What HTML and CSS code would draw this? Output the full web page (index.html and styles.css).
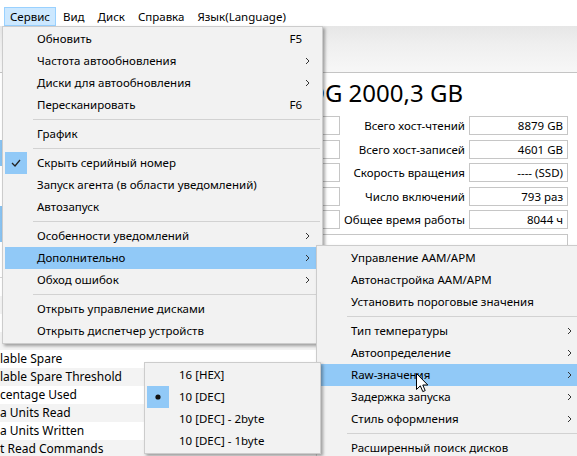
FILE: index.html
```html
<!DOCTYPE html>
<html lang="ru">
<head>
    <meta charset="UTF-8">
    <title>CrystalDiskInfo</title>
    <link rel="stylesheet" href="styles.css">
</head>
<body>
    <div class="menubar">
        <span class="mb-item active">Сервис</span>
        <span class="mb-item">Вид</span>
        <span class="mb-item">Диск</span>
        <span class="mb-item">Справка</span>
        <span class="mb-item">Язык(Language)</span>
    </div>

    <div class="toolbar"></div>

    <div class="content">
        <div class="top">
            <div class="side">
                <div class="status"></div>
                <div class="temp"></div>
            </div>
            <div class="main">
                <h1 class="model">DG 2000,3 GB</h1>
                <div class="info">
                    <span class="label"></span><span class="box"></span>
                    <span class="label">Всего хост-чтений</span><span class="box">8879 GB</span>
                    <span class="label"></span><span class="box"></span>
                    <span class="label">Всего хост-записей</span><span class="box">4601 GB</span>
                    <span class="label"></span><span class="box"></span>
                    <span class="label">Скорость вращения</span><span class="box">---- (SSD)</span>
                    <span class="label"></span><span class="box"></span>
                    <span class="label">Число включений</span><span class="box">793 раз</span>
                    <span class="label"></span><span class="box"></span>
                    <span class="label">Общее время работы</span><span class="box">8044 ч</span>
                </div>
                <div class="features"></div>
            </div>
        </div>

        <div class="attrs">
            <div class="attr-head"></div>
            <div class="attr-row"></div>
            <div class="attr-row"></div>
            <div class="attr-row"></div>
            <div class="attr-row"></div>
            <div class="attr-row">lable Spare</div>
            <div class="attr-row">lable Spare Threshold</div>
            <div class="attr-row">centage Used</div>
            <div class="attr-row">a Units Read</div>
            <div class="attr-row">a Units Written</div>
            <div class="attr-row">t Read Commands</div>
        </div>
    </div>

    <!-- Сервис -->
    <div class="menu menu-main">
        <div class="item">Обновить<span class="key">F5</span></div>
        <div class="item">Частота автообновления<span class="arrow"><svg width="5" height="8" viewBox="0 0 5 8"><polyline points="1,1 4,4 1,7"/></svg></span></div>
        <div class="item">Диски для автообновления<span class="arrow"><svg width="5" height="8" viewBox="0 0 5 8"><polyline points="1,1 4,4 1,7"/></svg></span></div>
        <div class="item">Пересканировать<span class="key">F6</span></div>
        <div class="sep"></div>
        <div class="item">График</div>
        <div class="sep"></div>
        <div class="item"><span class="mark"><svg width="22" height="22" viewBox="0 0 22 22"><polyline points="7,11 10,14 15,8"/></svg></span>Скрыть серийный номер</div>
        <div class="item">Запуск агента (в области уведомлений)</div>
        <div class="item">Автозапуск</div>
        <div class="sep"></div>
        <div class="item">Особенности уведомлений<span class="arrow"><svg width="5" height="8" viewBox="0 0 5 8"><polyline points="1,1 4,4 1,7"/></svg></span></div>
        <div class="item hover">Дополнительно<span class="arrow"><svg width="5" height="8" viewBox="0 0 5 8"><polyline points="1,1 4,4 1,7"/></svg></span></div>
        <div class="item">Обход ошибок<span class="arrow"><svg width="5" height="8" viewBox="0 0 5 8"><polyline points="1,1 4,4 1,7"/></svg></span></div>
        <div class="sep"></div>
        <div class="item">Открыть управление дисками</div>
        <div class="item">Открыть диспетчер устройств</div>
    </div>

    <!-- Дополнительно -->
    <div class="menu menu-extra">
        <div class="item">Управление AAM/APM</div>
        <div class="item">Автонастройка AAM/APM</div>
        <div class="item">Установить пороговые значения</div>
        <div class="sep"></div>
        <div class="item">Тип температуры<span class="arrow"><svg width="5" height="8" viewBox="0 0 5 8"><polyline points="1,1 4,4 1,7"/></svg></span></div>
        <div class="item">Автоопределение<span class="arrow"><svg width="5" height="8" viewBox="0 0 5 8"><polyline points="1,1 4,4 1,7"/></svg></span></div>
        <div class="item hover">Raw-значения<span class="arrow"><svg width="5" height="8" viewBox="0 0 5 8"><polyline points="1,1 4,4 1,7"/></svg></span></div>
        <div class="item">Задержка запуска<span class="arrow"><svg width="5" height="8" viewBox="0 0 5 8"><polyline points="1,1 4,4 1,7"/></svg></span></div>
        <div class="item">Стиль оформления<span class="arrow"><svg width="5" height="8" viewBox="0 0 5 8"><polyline points="1,1 4,4 1,7"/></svg></span></div>
        <div class="sep"></div>
        <div class="item">Расширенный поиск дисков</div>
    </div>

    <!-- Raw-значения -->
    <div class="menu menu-raw">
        <div class="item">16 [HEX]</div>
        <div class="item"><span class="mark"><svg width="22" height="22" viewBox="0 0 22 22"><circle cx="11" cy="11" r="2.6"/></svg></span>10 [DEC]</div>
        <div class="item">10 [DEC] - 2byte</div>
        <div class="item">10 [DEC] - 1byte</div>
    </div>

    <svg class="cursor" width="13" height="20" viewBox="0 0 13 20">
        <path d="M0.5 0.5 L0.5 16.5 L4.3 12.8 L6.8 18.6 L9.2 17.6 L6.8 12 L11.8 12 Z"/>
    </svg>
</body>
</html>
```

FILE: styles.css
```css
html, body {
    overflow: hidden;
}
body {
    margin: 0;
    width: 577px;
    height: 456px;
    background: #fff;
    font-family: "Noto Sans", "Open Sans", sans-serif;
    font-size: 11.5px;
    color: #000;
}

/* menu bar */
.menubar {
    height: 26px;
    display: flex;
    align-items: flex-end;
    padding-left: 4px;
    gap: 1px;
}
.mb-item {
    height: 19px;
    line-height: 18px;
    padding: 0 5px;
    border: 1px solid transparent;
    box-sizing: border-box;
}
.mb-item.active {
    background: #cce8ff;
    border-color: #99d1ff;
}

.toolbar {
    height: 46px;
    background: linear-gradient(to bottom, #e6e6e6, #efefef 40%, #f7f7f7);
    border-bottom: 1px solid #c4c4c4;
}

/* disk info */
.top {
    display: flex;
}
.side {
    width: 70px;
    padding-top: 67px;
}
.status {
    height: 26px;
    background: linear-gradient(to right, #8ac3f0, #3d8fe0);
}
.temp {
    height: 36px;
    margin-top: 40px;
    background: linear-gradient(to right, #8ac3f0, #3d8fe0);
}
.main {
    flex: 1;
    padding-right: 9px;
}
.model {
    margin: 0;
    height: 40px;
    line-height: 40px;
    font-size: 24px;
    font-weight: normal;
    text-align: right;
    padding-right: 105px;
}
.info {
    margin-top: 3px;
    display: grid;
    grid-template-columns: 1fr 36px 121px 99px;
    grid-auto-rows: 19px;
    column-gap: 4px;
    row-gap: 4.5px;
}
.label {
    text-align: right;
    line-height: 19px;
    white-space: nowrap;
}
.box {
    border: 1px solid #c6c6c6;
    text-align: right;
    padding-right: 4px;
    line-height: 17px;
}
.features {
    margin-top: 5px;
    height: 19px;
    border: 1px solid #c6c6c6;
}

/* smart attributes */
.attrs {
    margin-top: 5px;
    font-size: 12px;
}
.attr-head {
    height: 17px;
    border-bottom: 1px solid #d6d6d6;
}
.attr-row {
    height: 18px;
    line-height: 18px;
    white-space: nowrap;
}
.attr-row:nth-child(odd) {
    background: #f3f3f3;
}

/* popup menus */
.menu {
    position: absolute;
    box-sizing: border-box;
    background: #f2f2f2;
    border: 1px solid #cccccc;
    padding: 1px 2px;
    box-shadow: 2px 2px 3px rgba(0, 0, 0, 0.35);
}
.menu-main {
    left: 2px;
    top: 26px;
    width: 321px;
}
.menu-extra {
    left: 316px;
    top: 245px;
    width: 269px;
}
.menu-raw {
    left: 144px;
    top: 362px;
    width: 177px;
}
.item {
    position: relative;
    height: 22px;
    line-height: 22px;
    padding-left: 32px;
    white-space: nowrap;
}
.item.hover {
    background: #91c9f7;
}
.key {
    position: absolute;
    right: 18px;
    top: 0;
}
.arrow {
    position: absolute;
    right: 10px;
    top: 7px;
    height: 8px;
}
.arrow svg {
    display: block;
    fill: none;
    stroke: #333;
    stroke-width: 1;
}
.mark {
    position: absolute;
    left: 0;
    top: 0;
    width: 22px;
    height: 22px;
    background: #91c9f7;
}
.mark svg {
    display: block;
    fill: #111;
}
.mark polyline {
    fill: none;
    stroke: #222;
    stroke-width: 1.3;
}
.sep {
    height: 7px;
    position: relative;
}
.sep::after {
    content: "";
    position: absolute;
    left: 28px;
    right: 0;
    top: 3px;
    border-top: 1px solid #d2d2d2;
}

.cursor {
    position: absolute;
    left: 416px;
    top: 373px;
}
.cursor path {
    fill: #fff;
    stroke: #000;
    stroke-width: 1;
}
```
